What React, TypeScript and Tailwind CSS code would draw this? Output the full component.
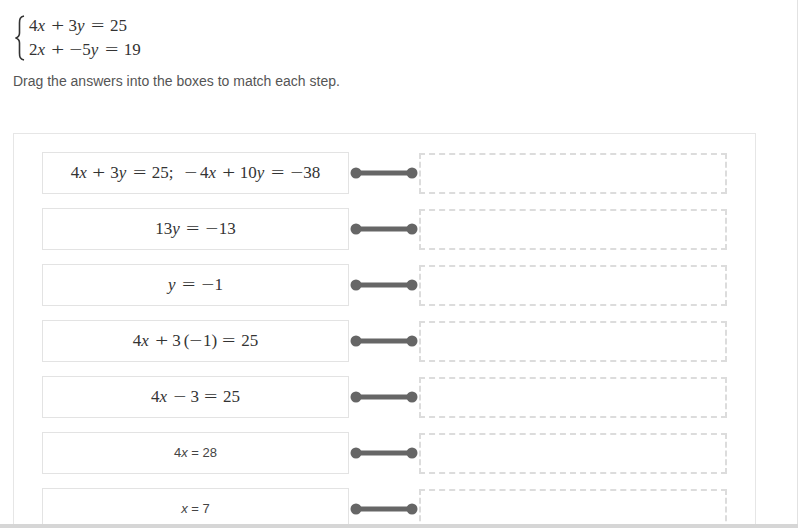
import React from "react"

const serif = "font-['Liberation_Serif','Times_New_Roman',serif]"

function V({ children }: { children: React.ReactNode }) {
    return <i className="italic mr-[1.5px]">{children}</i>
}

function M() {
    return <span className="inline-block scale-x-[1.35] mx-[2px]">−</span>
}

function Op({ children }: { children: React.ReactNode }) {
    return (
        <span className="inline-block w-[22px] text-center">
            <span className="inline-block scale-x-[1.35]">{children}</span>
        </span>
    )
}

function Rel({ children }: { children: React.ReactNode }) {
    return (
        <span className="inline-block w-[24px] text-center">
            <span className="inline-block scale-x-[1.4]">{children}</span>
        </span>
    )
}

const steps: React.ReactNode[] = [
    <span className={`${serif} text-[17px] text-[#333]`}>
        4<V>x</V><Op>+</Op>3<V>y</V><Rel>=</Rel>25;<span className="ml-[12px] mr-[5px] inline-block scale-x-[1.35]">−</span>4<V>x</V><Op>+</Op>10<V>y</V><Rel>=</Rel><M />38
    </span>,
    <span className={`${serif} text-[17px] text-[#333]`}>
        13<V>y</V><Rel>=</Rel><M />13
    </span>,
    <span className={`${serif} text-[17px] text-[#333]`}>
        <V>y</V><Rel>=</Rel><M />1
    </span>,
    <span className={`${serif} text-[17px] text-[#333]`}>
        4<V>x</V><Op>+</Op>3<span className="ml-[3px]">(<M />1)</span><Rel>=</Rel>25
    </span>,
    <span className={`${serif} text-[17px] text-[#333]`}>
        4<V>x</V><Op>−</Op>3<Rel>=</Rel>25
    </span>,
    <span className="font-['Liberation_Sans',Arial,sans-serif] text-[13px] text-[#444]">
        4<i>x</i> = 28
    </span>,
    <span className="font-['Liberation_Sans',Arial,sans-serif] text-[13px] text-[#444]">
        <i>x</i> = 7
    </span>,
]

function Connector() {
    return (
        <svg width="70" height="42" viewBox="0 0 70 42" className="shrink-0">
            <line x1="7" y1="21" x2="63" y2="21" stroke="#666" strokeWidth="5" />
            <circle cx="7" cy="21" r="5.5" fill="#666" />
            <circle cx="63" cy="21" r="5.5" fill="#666" />
        </svg>
    )
}

function Brace() {
    return (
        <svg width="12" height="46" viewBox="0 0 12 46" className="shrink-0">
            <path
                d="M10 1 C6 2 5.5 4 5.5 8 L5.5 18 C5.5 21 4 22.5 1.5 23 C4 23.5 5.5 25 5.5 28 L5.5 38 C5.5 42 6 44 10 45"
                fill="none"
                stroke="#333"
                strokeWidth="1.6"
            />
        </svg>
    )
}

export default function App() {
    return (
        <div className="w-[798px] h-[528px] overflow-hidden bg-white flex flex-col">
            <div className="h-[524px] overflow-hidden border-r border-[#e2e2e2]">
                <div className="flex items-center pl-[14px] pt-[14px]">
                    <Brace />
                    <div className={`${serif} text-[17px] leading-[24px] text-[#333] ml-[3px]`}>
                        <div>
                            4<V>x</V><Op>+</Op>3<V>y</V><Rel>=</Rel>25
                        </div>
                        <div>
                            2<V>x</V><Op>+</Op><M />5<V>y</V><Rel>=</Rel>19
                        </div>
                    </div>
                </div>
                <p className="font-['Liberation_Sans',Arial,sans-serif] text-[14px] leading-[20px] text-[#555] ml-[13px] mt-[9px]">
                    Drag the answers into the boxes to match each step.
                </p>
                <div className="ml-[13px] mt-[42px] w-[743px] border border-[#e6e6e6] pl-[28px] pr-[28px] pt-[18px] flex flex-col gap-[14px]">
                    {steps.map((s, i) => (
                        <div key={i} className="flex items-center">
                            <div className="w-[308px] h-[42px] border border-[#e3e3e3] flex items-center justify-center">
                                {s}
                            </div>
                            <Connector />
                            <div className="w-[309px] h-[41px] border-2 border-dashed border-[#dcdcdc]" />
                        </div>
                    ))}
                </div>
            </div>
            <div className="h-[4px] bg-[#d6d6d6]" />
        </div>
    )
}
